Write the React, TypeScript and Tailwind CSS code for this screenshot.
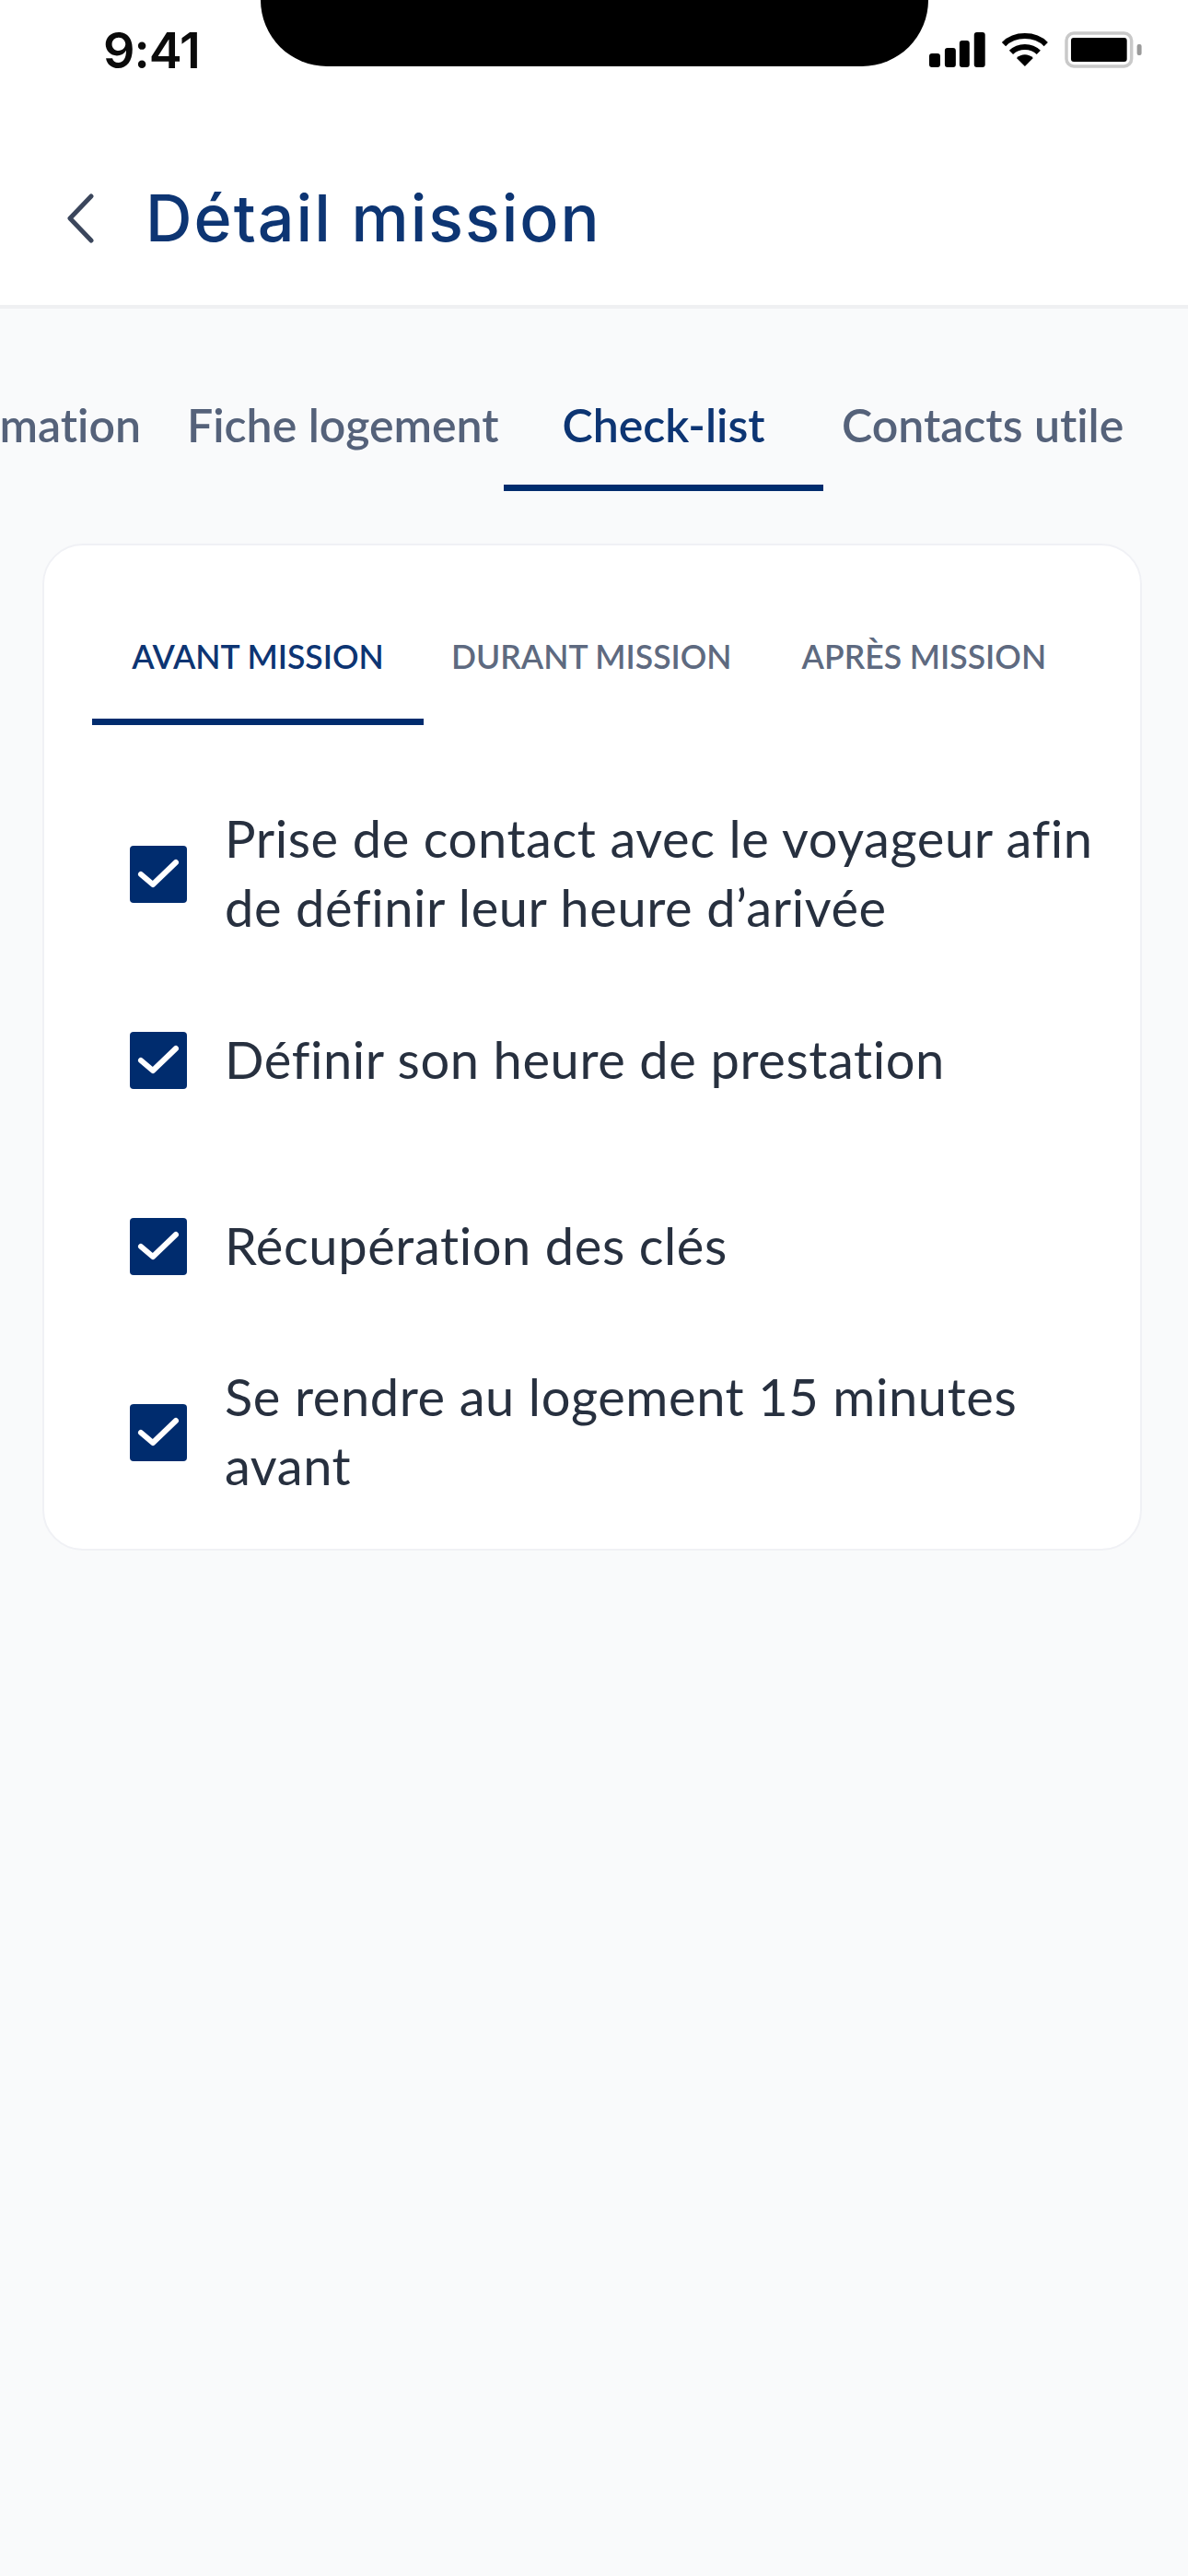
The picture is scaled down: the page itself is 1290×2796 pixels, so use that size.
import React from 'react';

const NAVY = 'bg-[#002c6e]';

const items = [
  'Prise de contact avec le voyageur afin de définir leur heure d’arivée',
  'Définir son heure de prestation',
  'Récupération des clés',
  'Se rendre au logement 15 minutes avant',
];

const StatusIcons = () => (
  <div className="flex items-center w-[233px] h-[40px] mt-[34px]">
    <svg width="62" height="40" viewBox="0 0 62 40" fill="#000">
      <rect x="1" y="24" width="12" height="15" rx="3" />
      <rect x="18" y="18" width="12" height="21" rx="3" />
      <rect x="34" y="10" width="11" height="29" rx="3" />
      <rect x="50" y="1" width="12" height="38" rx="3" />
    </svg>
    <svg className="ml-[17px]" width="52" height="40" viewBox="0 0 52 40" fill="none" stroke="#000" strokeWidth="6">
      <path d="M3 14 C15 2 37 2 49 14" />
      <path d="M11 23 C19 15 33 15 41 23" />
      <path d="M17 29 L26 38 L35 29 C30 24 22 24 17 29 Z" fill="#000" stroke="none" />
    </svg>
    <svg className="ml-[18px]" width="85" height="40" viewBox="0 0 85 40" fill="none">
      <rect x="2" y="2" width="71" height="36" rx="8" stroke="#c9c9c9" strokeWidth="3.5" />
      <rect x="7" y="7" width="61" height="26" rx="3" fill="#000" />
      <rect x="79" y="14" width="5" height="12" rx="2" fill="#9a9a9a" />
    </svg>
  </div>
);

const Check = () => (
  <div className={`w-[62px] h-[62px] shrink-0 mt-[3px] rounded-[4px] flex items-center justify-center ${NAVY}`}>
    <svg width="48" height="40" viewBox="0 0 48 40" fill="none" stroke="#fff" strokeWidth="6" strokeLinecap="round" strokeLinejoin="round">
      <path d="M5 20 L18 31 L43 7" />
    </svg>
  </div>
);

export default function App() {
  return (
    <div className="w-[1290px] h-[2796px] bg-[#f9fafb] overflow-hidden font-['Lato',sans-serif] [font-variant-ligatures:none]">
      <div className="bg-white border-b-[4px] border-[#eff0f2] h-[335px]">
        <div className="flex h-[72px]">
          <span className="ml-[112px] w-[171px] mt-[25px] text-[54px] leading-[60px] font-semibold text-[#0b0b0b] font-['Inter',sans-serif] tracking-[-1px]">
            9:41
          </span>
          <div className="w-[725px] h-[72px] bg-black rounded-b-[72px]" />
          <StatusIcons />
        </div>
        <div className="flex items-center h-[259px] pl-[70px] pt-[70px]">
          <svg width="34" height="54" viewBox="0 0 34 54" fill="none" stroke="#3b465c" strokeWidth="5" strokeLinecap="round" strokeLinejoin="round">
            <path d="M29 3 L6 27 L29 51" />
          </svg>
          <h1 className="ml-[54px] text-[70px] leading-[80px] font-medium text-[#0d3573] font-['Inter',sans-serif] tracking-[2px]">
            Détail mission
          </h1>
        </div>
      </div>

      <div className="flex h-[198px] overflow-hidden text-[50px] font-semibold text-[#55627a]">
        <div className="flex items-start w-[1290px] pt-[98px] whitespace-nowrap">
          <span className="ml-[-140px] w-[293px] text-right leading-[56px]">Information</span>
          <span className="ml-[50px] w-[344px] leading-[56px]">Fiche logement</span>
          <div className="w-[347px] h-[100px] border-b-[7px] border-[#002c6e] text-center leading-[56px] text-[#0d3573]">
            Check-list
          </div>
          <span className="ml-[20px] leading-[56px]">Contacts utile</span>
        </div>
      </div>

      <div className="ml-[46px] mr-[50px] mt-[57px] h-[1093px] bg-white border-2 border-[#f0f1f5] rounded-[44px] px-[52px]">
        <div className="flex h-[195px] text-[35.5px] font-semibold text-[#5e6a80] uppercase whitespace-nowrap">
          <div className="w-[360px] h-[195px] pt-[96px] text-center leading-[50px] text-[#0d3573] border-b-[7px] border-[#002c6e]">
            Avant mission
          </div>
          <span className="ml-[30px] pt-[96px] leading-[50px]">Durant mission</span>
          <span className="ml-[76px] pt-[96px] leading-[50px]">Après mission</span>
        </div>
        <ul className="flex flex-col gap-[52px] mt-[85px] pl-[41px] mr-[-30px]">
          {items.map((text) => (
            <li key={text} className="flex items-center h-[150px] gap-[41px]">
              <Check />
              <span className="text-[56px] leading-[75px] tracking-[0.6px] text-[#27303f] w-[960px]">{text}</span>
            </li>
          ))}
        </ul>
      </div>
    </div>
  );
}
